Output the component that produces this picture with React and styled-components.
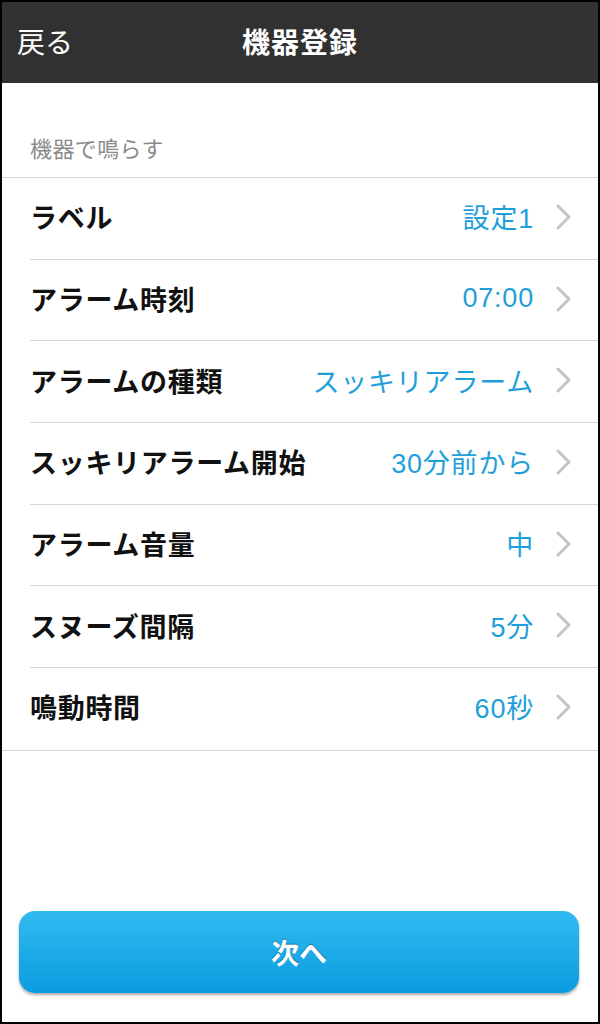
import React from "react";
import styled, { createGlobalStyle } from "styled-components";

const Global = createGlobalStyle`
  html, body { margin: 0; padding: 0; background: #fff; }
  body { font-family: "Noto Sans CJK JP", "Noto Sans", sans-serif; }
  * { box-sizing: border-box; }
`;

const Frame = styled.div`
  width: 600px;
  height: 1024px;
  border: 2px solid #000;
  display: flex;
  flex-direction: column;
  background: #fff;
`;

const Header = styled.header`
  height: 81px;
  background: #313131;
  display: grid;
  grid-template-columns: 1fr auto 1fr;
  align-items: center;
  color: #fff;
  padding: 0 15px 3px;
`;

const Back = styled.span`
  font-size: 28px;
  font-weight: 400;
  justify-self: start;
`;

const Title = styled.h1`
  margin: 0;
  font-size: 28px;
  font-weight: 700;
  letter-spacing: 1px;
`;

const SectionLabel = styled.div`
  padding: 49px 28px 0;
  height: 94px;
  font-size: 22px;
  letter-spacing: 0.4px;
  color: #8a8a8a;
  line-height: 30px;
`;

const List = styled.ul`
  list-style: none;
  margin: 0;
  padding: 0;
  border-top: 1px solid #d6d6d6;
  border-bottom: 1px solid #d6d6d6;
`;

const Row = styled.li`
  position: relative;
  height: 81.7px;
  display: flex;
  align-items: center;
  padding: 0 26px 4px 28px;
  &:not(:last-child)::after {
    content: "";
    position: absolute;
    left: 28px;
    right: 0;
    bottom: 0;
    height: 1px;
    background: #d6d6d6;
  }
`;

const Label = styled.span`
  flex: 1;
  font-size: 27px;
  font-weight: 700;
  letter-spacing: 0.7px;
  color: #111;
`;

const Value = styled.span`
  font-family: "Liberation Sans", "Noto Sans CJK JP", sans-serif;
  font-size: 27px;
  letter-spacing: 0.8px;
  color: #1f9fda;
  margin-right: 22px;
`;

const Chevron = () => (
  <svg width="16" height="26" viewBox="0 0 16 26" fill="none">
    <path d="M2 2 L13 13 L2 24" stroke="#c4c4c8" strokeWidth="3" strokeLinecap="round" strokeLinejoin="round" />
  </svg>
);

const Spacer = styled.div`
  flex: 1;
`;

const Footer = styled.div`
  padding: 0 19px 29px 17px;
`;

const NextButton = styled.button`
  width: 100%;
  height: 82px;
  border: none;
  border-radius: 16px;
  background: linear-gradient(#31bbf1, #0a9cdf);
  box-shadow: 0 2px 3px rgba(0, 0, 0, 0.35);
  color: #fff;
  font-family: inherit;
  font-size: 28px;
  font-weight: 700;
  text-shadow: 0 -1px 1px rgba(0, 0, 0, 0.35);
`;

const rows = [
  ["ラベル", "設定1"],
  ["アラーム時刻", "07:00"],
  ["アラームの種類", "スッキリアラーム"],
  ["スッキリアラーム開始", "30分前から"],
  ["アラーム音量", "中"],
  ["スヌーズ間隔", "5分"],
  ["鳴動時間", "60秒"],
];

export default function App() {
  return (
    <>
      <Global />
      <Frame>
        <Header>
          <Back>戻る</Back>
          <Title>機器登録</Title>
          <span />
        </Header>
        <SectionLabel>機器で鳴らす</SectionLabel>
        <List>
          {rows.map(([l, v]) => (
            <Row key={l}>
              <Label>{l}</Label>
              <Value>{v}</Value>
              <Chevron />
            </Row>
          ))}
        </List>
        <Spacer />
        <Footer>
          <NextButton>次へ</NextButton>
        </Footer>
      </Frame>
    </>
  );
}
